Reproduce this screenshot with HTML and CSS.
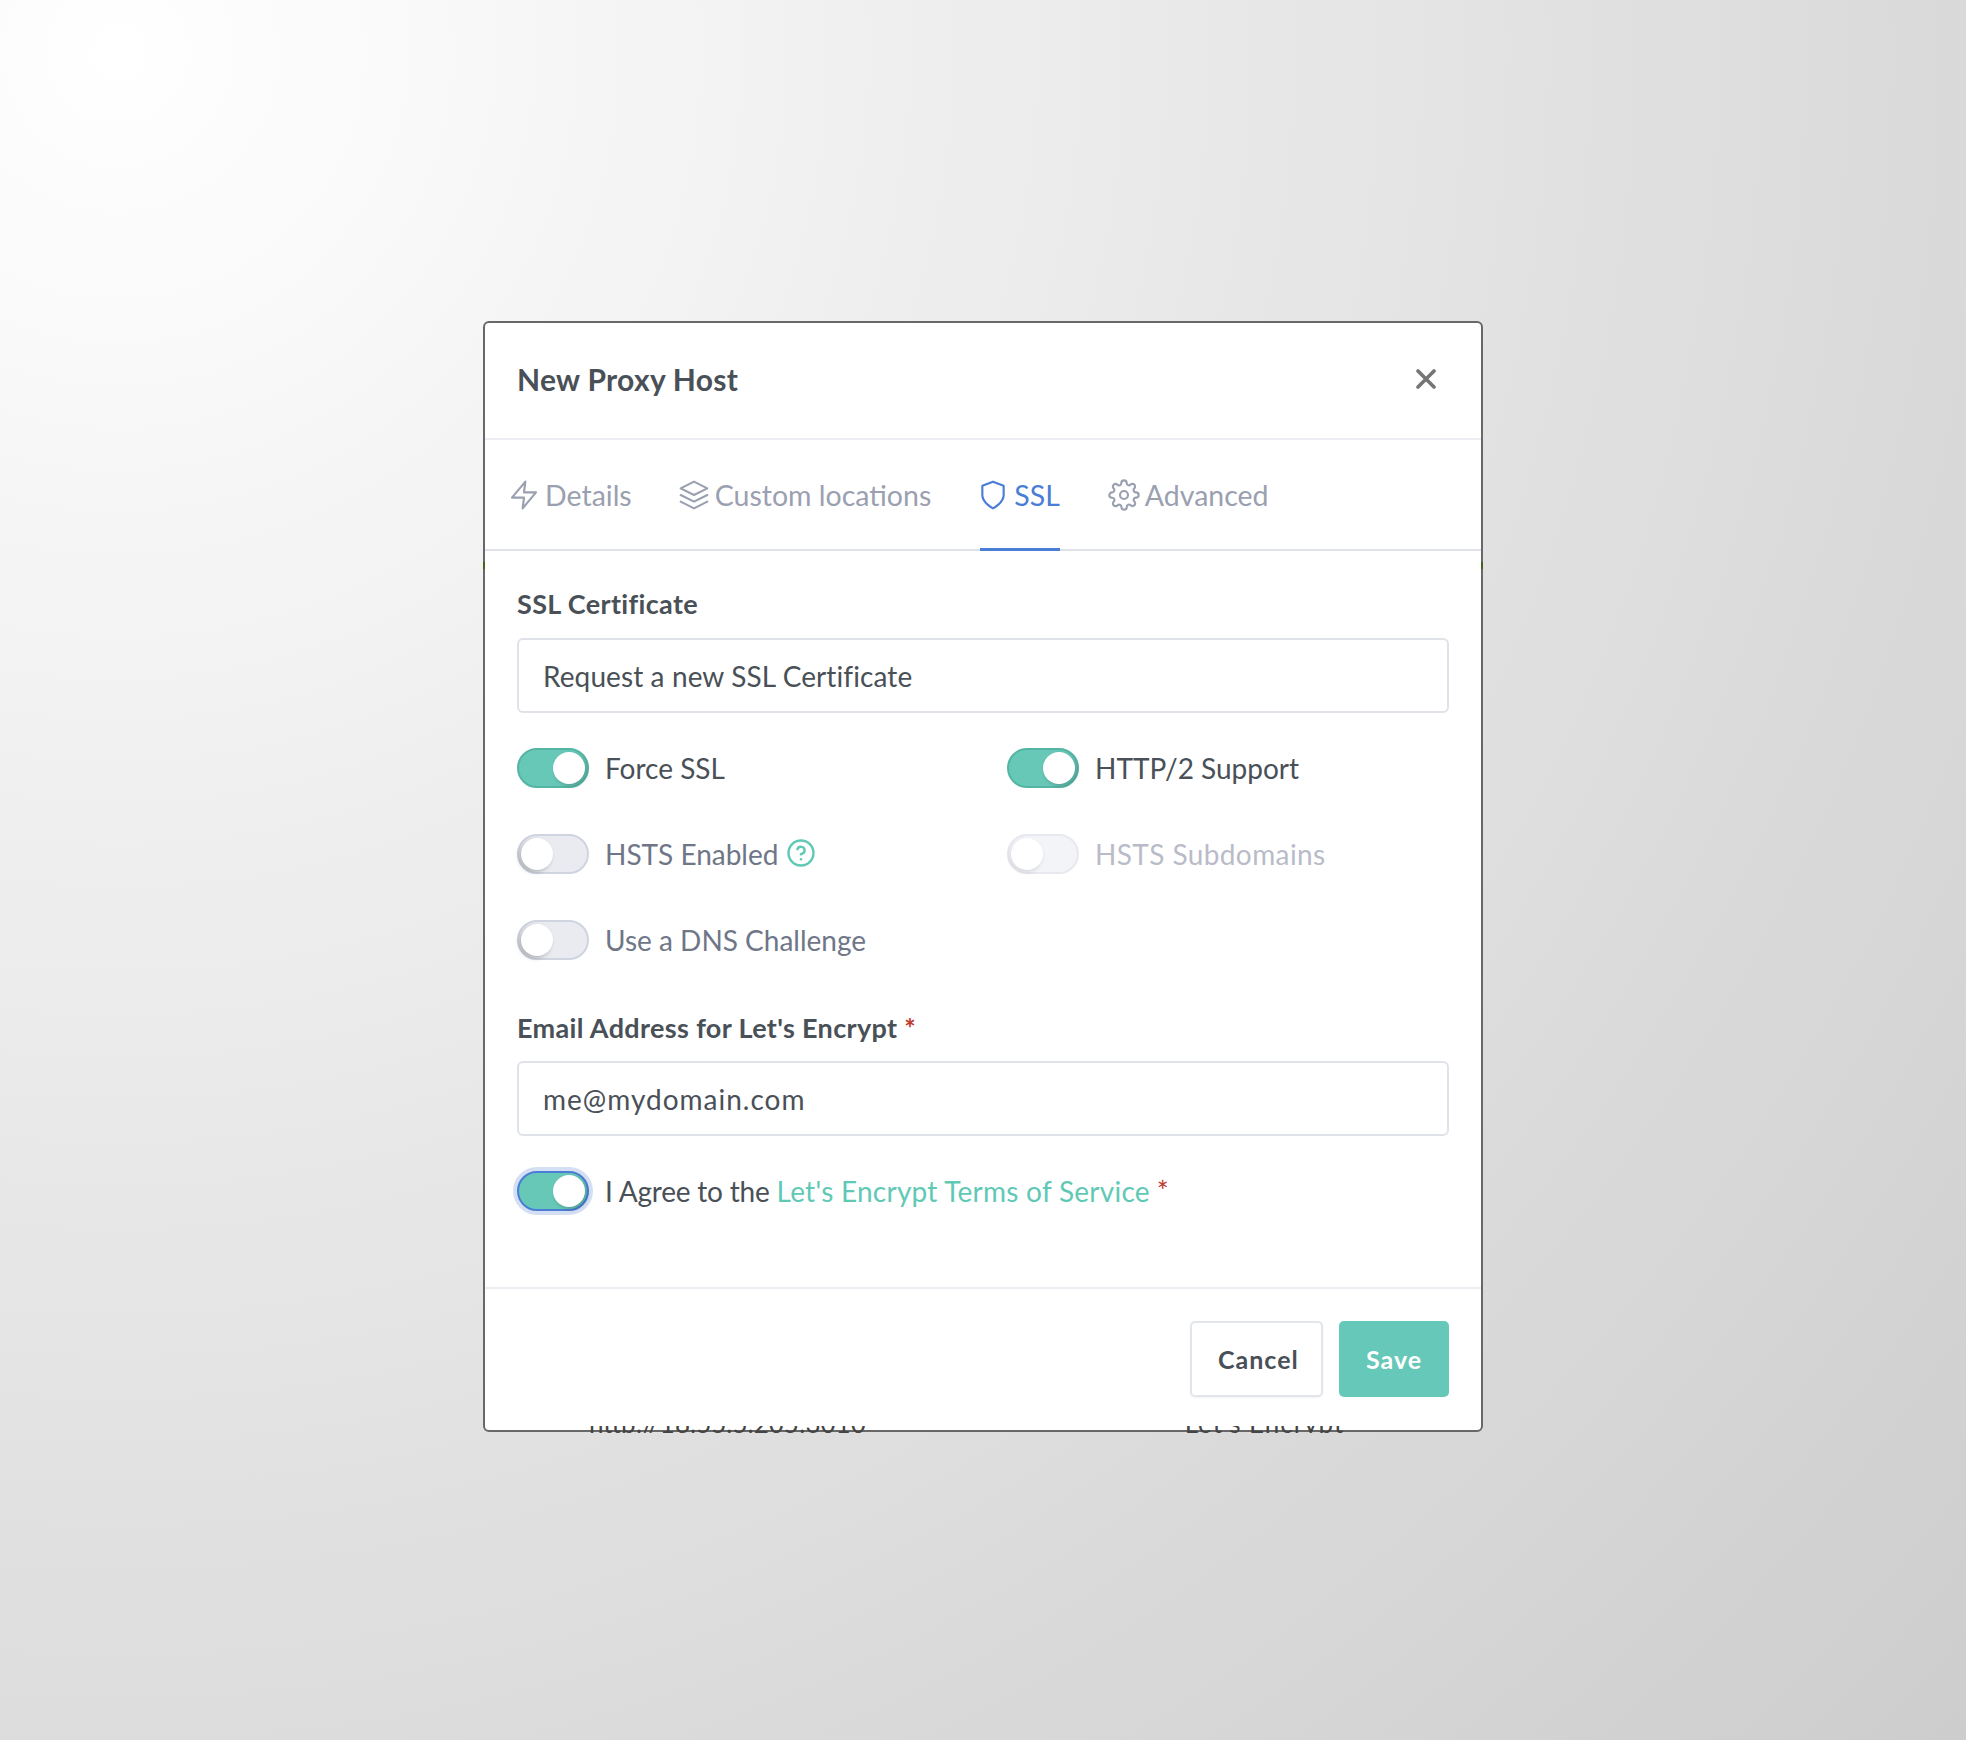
FILE: index.html
```html
<!DOCTYPE html>
<html lang="en">

<head>
  <meta charset="UTF-8">
  <title>New Proxy Host</title>
  <link rel="stylesheet" href="styles.css">
</head>

<body>
  <div class="modal">
    <div class="modal-header">
      <h1 class="modal-title">New Proxy Host</h1>
      <svg class="close-icon" viewBox="0 0 20 20"><path d="M2 2l16 16M18 2L2 18"/></svg>
    </div>

    <div class="tabs">
      <a class="tab">
        <svg class="tab-icon" viewBox="0 0 24 24"><polygon points="13 2 3 14 12 14 11 22 21 10 12 10 13 2"/></svg>
        Details
      </a>
      <a class="tab">
        <svg class="tab-icon" viewBox="0 0 24 24"><polygon points="12 2 2 7 12 12 22 7 12 2"/><polyline points="2 17 12 22 22 17"/><polyline points="2 12 12 17 22 12"/></svg>
        Custom locations
      </a>
      <a class="tab active">
        <svg class="tab-icon" viewBox="0 0 24 24"><path d="M12 22s8-4 8-10V5l-8-3-8 3v7c0 6 8 10 8 10z"/></svg>
        SSL
      </a>
      <a class="tab tab-last">
        <svg class="tab-icon" viewBox="0 0 24 24"><circle cx="12" cy="12" r="3"/><path d="M19.4 15a1.65 1.65 0 0 0 .33 1.82l.06.06a2 2 0 0 1 0 2.83 2 2 0 0 1-2.83 0l-.06-.06a1.65 1.65 0 0 0-1.82-.33 1.65 1.65 0 0 0-1 1.51V21a2 2 0 0 1-2 2 2 2 0 0 1-2-2v-.09A1.65 1.65 0 0 0 9 19.4a1.65 1.65 0 0 0-1.82.33l-.06.06a2 2 0 0 1-2.83 0 2 2 0 0 1 0-2.83l.06-.06a1.65 1.65 0 0 0 .33-1.82 1.65 1.65 0 0 0-1.51-1H3a2 2 0 0 1-2-2 2 2 0 0 1 2-2h.09A1.65 1.65 0 0 0 4.6 9a1.65 1.65 0 0 0-.33-1.82l-.06-.06a2 2 0 0 1 0-2.83 2 2 0 0 1 2.83 0l.06.06a1.65 1.65 0 0 0 1.82.33H9a1.65 1.65 0 0 0 1-1.51V3a2 2 0 0 1 2-2 2 2 0 0 1 2 2v.09a1.65 1.65 0 0 0 1 1.51 1.65 1.65 0 0 0 1.82-.33l.06-.06a2 2 0 0 1 2.83 0 2 2 0 0 1 0 2.83l-.06.06a1.65 1.65 0 0 0-.33 1.82V9a1.65 1.65 0 0 0 1.51 1H21a2 2 0 0 1 2 2 2 2 0 0 1-2 2h-.09a1.65 1.65 0 0 0-1.51 1z"/></svg>
        Advanced
      </a>
    </div>

    <div class="modal-body">
      <label class="field-label">SSL Certificate</label>
      <div class="field-input">Request a new SSL Certificate</div>

      <div class="switch-grid">
        <div class="switch on"><span class="switch-track"></span><span class="switch-text">Force SSL</span></div>
        <div class="switch on"><span class="switch-track"></span><span class="switch-text">HTTP/2 Support</span></div>
        <div class="switch">
          <span class="switch-track"></span><span class="switch-text">HSTS Enabled</span>
          <svg class="help-icon" viewBox="0 0 24 24"><circle cx="12" cy="12" r="10"/><path d="M9.09 9a3 3 0 0 1 5.83 1c0 2-3 3-3 3"/><line x1="12" y1="17" x2="12.01" y2="17"/></svg>
        </div>
        <div class="switch disabled"><span class="switch-track"></span><span class="switch-text">HSTS Subdomains</span></div>
        <div class="switch"><span class="switch-track"></span><span class="switch-text">Use a DNS Challenge</span></div>
      </div>

      <label class="field-label email-label">Email Address for Let's Encrypt <span class="required">*</span></label>
      <div class="field-input email-value">me@mydomain.com</div>

      <div class="switch on focused agree">
        <span class="switch-track"></span>
        <span class="switch-text">I Agree to the <a class="terms-link">Let's Encrypt Terms of Service</a> <span class="required">*</span></span>
      </div>
    </div>

    <div class="modal-footer">
      <button class="btn btn-cancel">Cancel</button>
      <button class="btn btn-save">Save</button>
    </div>

    <!-- table row of the page behind, only its lowest pixels show under the dialog -->
    <div class="behind-row">
      <span class="behind-host">http://18.55.5.205:3010</span>
      <span class="behind-ssl">Let's Encrypt</span>
    </div>
  </div>
</body>

</html>
```

FILE: styles.css
```css
* {
  box-sizing: border-box;
}

html,
body {
  margin: 0;
  height: 1740px;
}

body {
  font-family: "Lato", "Noto Sans", sans-serif;
  font-size: 28px;
  color: #495057;
  padding-top: 321px;
  overflow: hidden;
  background: radial-gradient(circle at 6% 3%, #ffffff 0, #f8f8f8 14%, #eeeeee 33%, #dbdbdb 70%, #cdcdcd 100%);
}

.modal {
  position: relative;
  width: 1000px;
  height: 1111px;
  margin: 0 auto;
  background: #fff;
  border: 2px solid #686868;
  border-radius: 6px;
  display: flex;
  flex-direction: column;
}

/* stray coloured pixels of the page behind, at the tab divider level */
.modal::before,
.modal::after {
  content: "";
  position: absolute;
  top: 239px;
  width: 2px;
  height: 7px;
  background: #46601f;
}

.modal::before {
  left: -2px;
}

.modal::after {
  right: -2px;
}

.modal-header {
  height: 117px;
  padding: 0 45px 4px 32px;
  display: flex;
  align-items: center;
  justify-content: space-between;
  border-bottom: 2px solid #eceef3;
}

.modal-title {
  margin: 0;
  font-size: 30px;
  font-weight: 700;
  letter-spacing: 0.3px;
  color: #495057;
}

.close-icon {
  width: 20px;
  height: 20px;
  fill: none;
  stroke: #757575;
  stroke-width: 3.6;
  stroke-linecap: round;
}

.tabs {
  height: 111px;
  padding-left: 26px;
  display: flex;
  gap: 49px;
  border-bottom: 2px solid #dfe2e8;
}

.tab {
  display: flex;
  align-items: center;
  height: 111px;
  padding-top: 2px;
  font-size: 28.5px;
  color: #9aa0b0;
  border-bottom: 3px solid transparent;
}

.tab.active {
  color: #4a7dd6;
  border-bottom-color: #4a7dd6;
}

.tab-last {
  margin-left: 2px;
}

.tab-icon {
  width: 32px;
  height: 32px;
  margin: 0 5px 0 -3px;
  fill: none;
  stroke: currentColor;
  stroke-width: 1.6;
  stroke-linecap: round;
  stroke-linejoin: round;
}

.modal-body {
  flex: 1;
  padding: 35px 32px 0;
}

.field-label {
  display: block;
  font-size: 27px;
  font-weight: 700;
  letter-spacing: 0.35px;
  line-height: 36px;
  margin-bottom: 16px;
}

.email-label {
  margin-top: 50px;
  margin-bottom: 15px;
}

.required {
  color: #c0392b;
}

.field-input {
  height: 75px;
  padding: 0 24px;
  display: flex;
  align-items: center;
  border: 2px solid #dfe2e8;
  border-radius: 6px;
  font-size: 28px;
  letter-spacing: 0.1px;
}

.email-value {
  letter-spacing: 1px;
}

.switch-grid {
  margin-top: 35px;
  display: grid;
  grid-template-columns: 442px 442px;
  column-gap: 48px;
  row-gap: 46px;
}

.switch {
  display: flex;
  align-items: center;
  height: 40px;
  color: #6e7687;
}

.switch-track {
  position: relative;
  flex: none;
  width: 72px;
  height: 40px;
  margin-right: 16px;
  border-radius: 20px;
  background: #e9ebf0;
  border: 2px solid #cfd4e0;
}

.switch-track::after {
  content: "";
  position: absolute;
  top: 2px;
  left: 2px;
  width: 32px;
  height: 32px;
  border-radius: 50%;
  background: #fff;
  box-shadow: -2px 2px 4px rgba(0, 0, 0, 0.25);
}

.switch.on {
  color: #495057;
}

.switch.on .switch-track {
  background: #67c8b8;
  border-color: #55b5a4;
}

.switch.on .switch-track::after {
  left: auto;
  right: 2px;
  box-shadow: 2px 2px 4px rgba(0, 0, 0, 0.2);
}

.switch.disabled {
  color: #b9bcc8;
  letter-spacing: 0.4px;
}

.switch.disabled .switch-track {
  background: #f3f4f7;
  border-color: #e7e9ee;
}

.switch.disabled .switch-track::after {
  box-shadow: -1px 2px 4px rgba(0, 0, 0, 0.12);
}

.switch.focused .switch-track {
  border-color: #4a7dd6;
  box-shadow: 0 0 0 4px #d5dff3;
}

.help-icon {
  width: 30px;
  height: 30px;
  margin-left: 8px;
  margin-top: -3px;
  fill: none;
  stroke: #5fc9b5;
  stroke-width: 1.9;
  stroke-linecap: round;
  stroke-linejoin: round;
}

.agree {
  margin-top: 35px;
  letter-spacing: -0.2px;
}

.terms-link {
  color: #5fc9b5;
  letter-spacing: 0.25px;
}

.modal-footer {
  height: 143px;
  padding: 32px 32px 0 0;
  display: flex;
  justify-content: flex-end;
  gap: 16px;
  border-top: 2px solid #eceef3;
}

.btn {
  height: 76px;
  padding: 0 26px;
  font-family: inherit;
  font-size: 25px;
  font-weight: 700;
  letter-spacing: 1px;
  border-radius: 5px;
}

.btn-cancel {
  width: 133px;
  color: #495057;
  background: #fff;
  border: 2px solid #e2e5ec;
  box-shadow: 0 1px 2px rgba(0, 0, 0, 0.05);
}

.btn-save {
  width: 110px;
  color: #fff;
  background: #66c8b8;
  border: none;
}

.behind-row {
  position: absolute;
  left: 0;
  right: 0;
  top: 1103px;
  height: 7px;
  overflow: hidden;
  font-size: 26px;
  line-height: 20px;
  color: #444;
  display: flex;
  align-items: flex-end;
}

.behind-host {
  margin-left: 104px;
}

.behind-ssl {
  margin-left: 319px;
  letter-spacing: 1px;
}
```
